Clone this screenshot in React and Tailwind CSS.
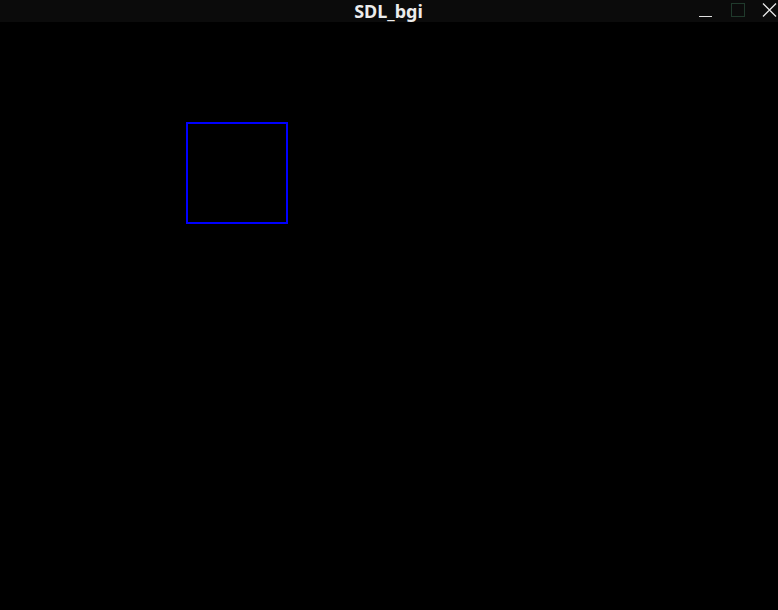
export default function App() {
  return (
    <div className="w-[778px] h-[610px] bg-black flex flex-col overflow-hidden font-['Noto_Sans',sans-serif]">
      {/* title bar */}
      <div className="h-[22px] bg-[#0b0b0b] relative flex items-center justify-center shrink-0">
        <span className="text-[18px] font-bold text-[#ececec] leading-none ml-[-1px]">SDL_bgi</span>
        <div className="absolute right-0 top-0 h-[22px] flex items-start">
          <div className="w-[14px] h-[17px] mr-[18px] flex items-end">
            <div className="w-[13px] h-[1px] bg-[#e0e0e0]" />
          </div>
          <div className="w-[14px] h-[14px] mt-[3px] mr-[17px] border border-[#203a2c]" />
          <svg className="mt-[3px] mr-[1px]" width="15" height="14" viewBox="0 0 15 14">
            <path d="M1 0.5 L14 13.5 M14 0.5 L1 13.5" stroke="#e6e6e6" strokeWidth="1.3" fill="none" />
          </svg>
        </div>
      </div>
      {/* drawing canvas */}
      <div className="relative flex-1 bg-black">
        <div className="absolute left-[186px] top-[100px] w-[102px] h-[102px] border-2 border-[#0000ff]" />
      </div>
    </div>
  );
}
